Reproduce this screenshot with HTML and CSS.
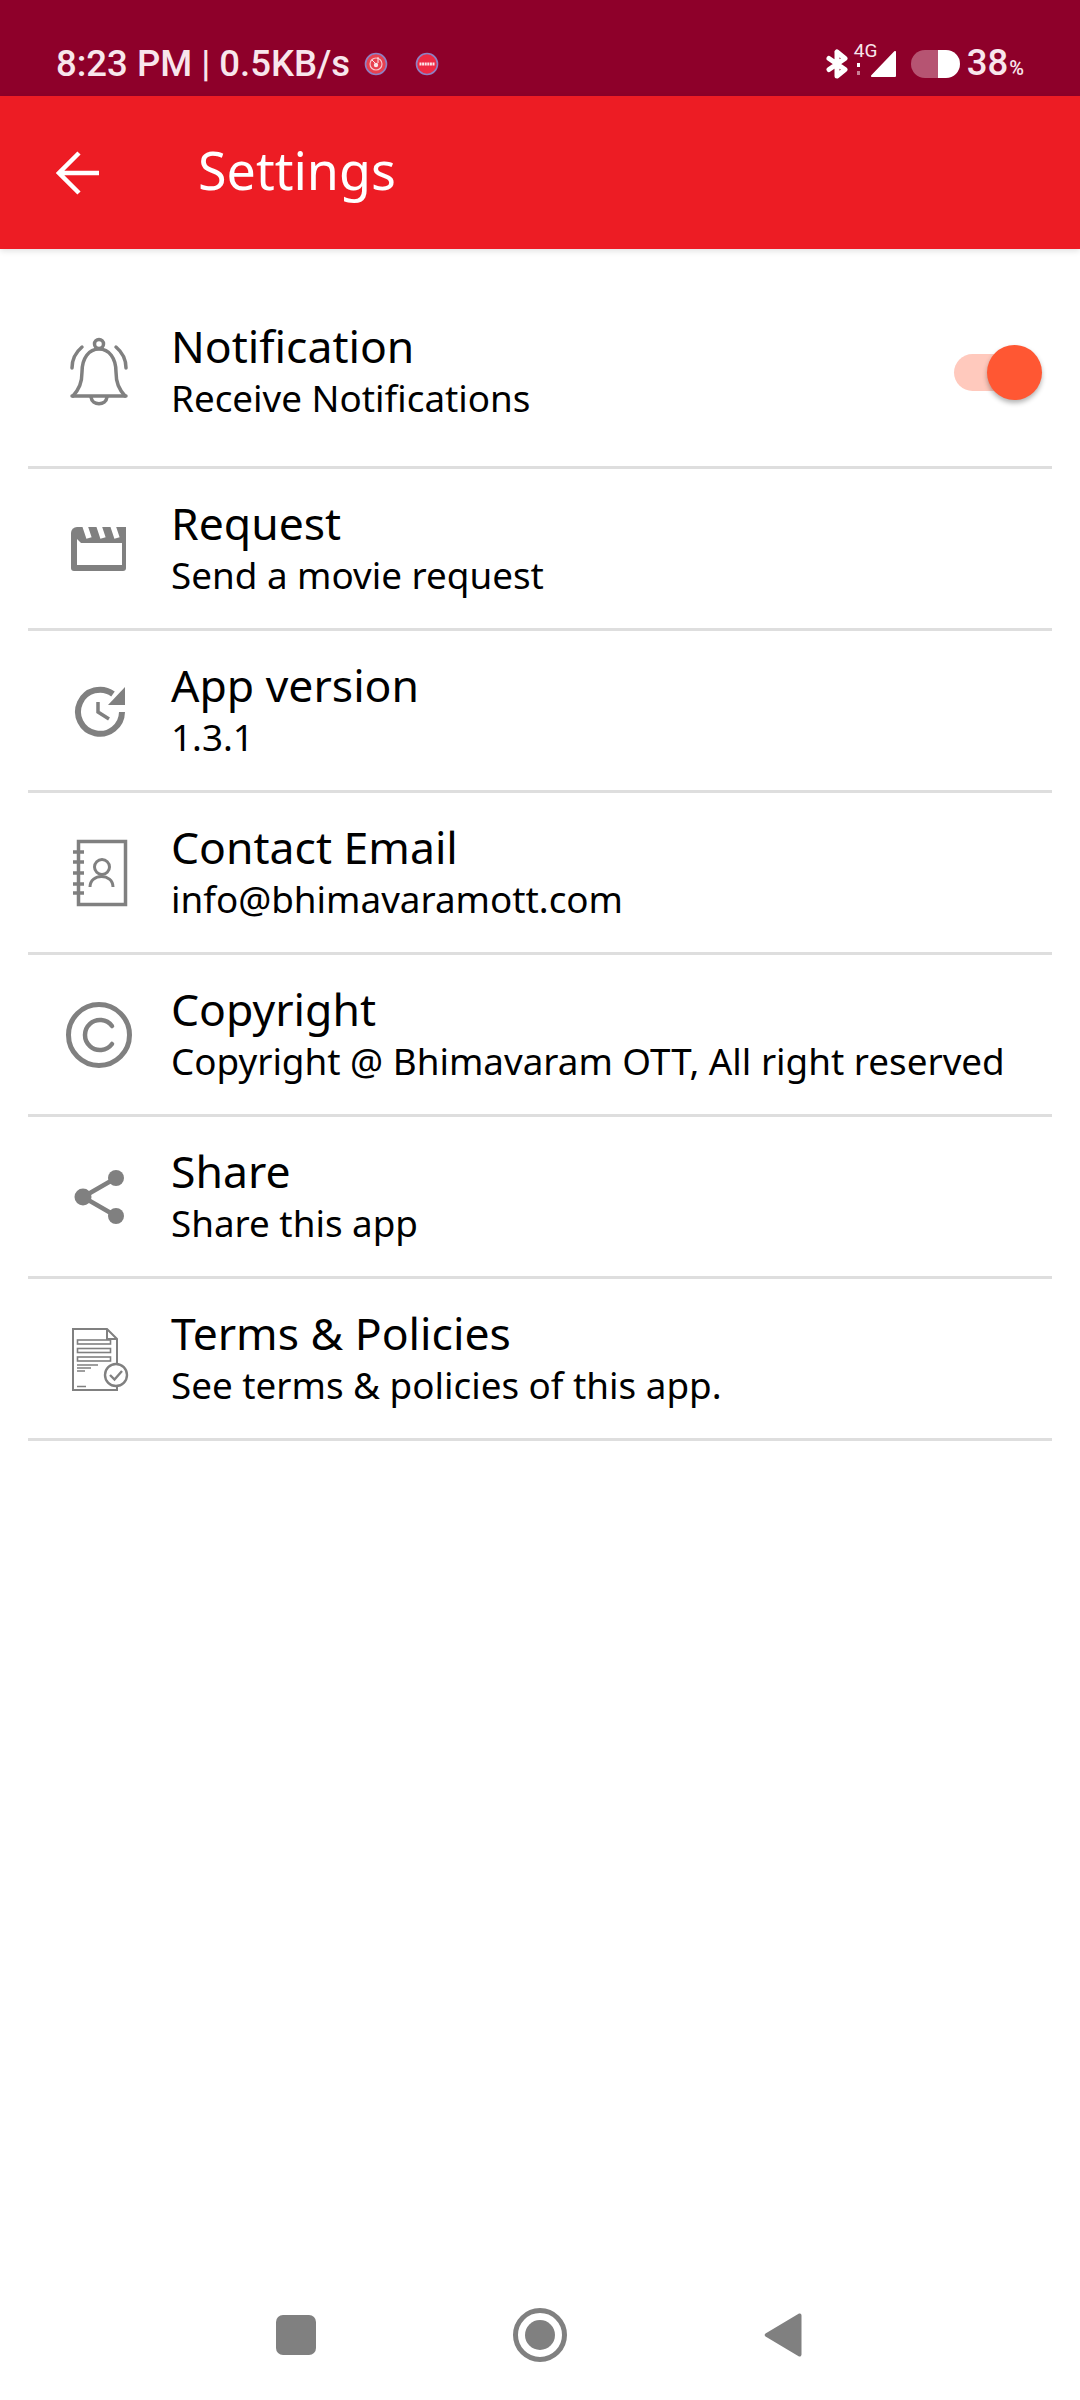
FILE: index.html
```html
<!DOCTYPE html>
<html lang="en">
<head>
<meta charset="utf-8">
<title>Settings</title>
<link rel="stylesheet" href="styles.css">
</head>
<body>
<div class="screen">
  <header class="status">
    <div class="status-left">
      <span class="status-time">8:23 PM | 0.5KB/s</span>
      <svg class="app-dot" viewBox="0 0 24 24"><circle cx="12" cy="12" r="10.5" fill="#e8404f" stroke="#8f80c4" stroke-width="1.6"/><circle cx="12" cy="12" r="6" fill="none" stroke="#f6c4cc" stroke-width="1.2"/><circle cx="12" cy="13" r="2.2" fill="#fbe4e8"/><path d="M14 5v6M8 8l3 3" stroke="#fbe4e8" stroke-width="1"/></svg>
      <svg class="app-dot app-dot-second" viewBox="0 0 24 24"><circle cx="12" cy="12" r="10.5" fill="#ee2a44" stroke="#8f80c4" stroke-width="1.6"/><path d="M4.5 12h15" stroke="#fbe4e8" stroke-width="3" stroke-dasharray="2 .6"/></svg>
    </div>
    <div class="status-right">
      <svg class="sb-bt" viewBox="0 0 24 30"><path d="M12 3v24l8-6.500-16-11M12 3l8 6.500-16 11" fill="none" stroke="#fff" stroke-width="5" stroke-linejoin="round" stroke-linecap="round"/></svg>
      <div class="sb-net">
        <span class="sb-4g">4G</span>
        <span class="sb-dots"><i class="sb-dot"></i><i class="sb-dot sb-dot-dim"></i></span>
      </div>
      <svg class="sb-signal" viewBox="0 0 28 28"><path d="M26 2v24a1 1 0 0 1-1 1H2a1 1 0 0 1-.7-1.700L24.300 1.300A1 1 0 0 1 26 2z" fill="#fff"/></svg>
      <div class="sb-battery"><span class="sb-battery-empty"></span><span class="sb-battery-full"></span></div>
      <span class="sb-level">38<span class="sb-pct">%</span></span>
    </div>
  </header>

  <div class="appbar">
    <svg class="back" viewBox="0 0 44 44"><path d="M43 22H3M23 2 3 22l20 20" fill="none" stroke="#fff" stroke-width="4.500"/></svg>
    <h1 class="appbar-title">Settings</h1>
  </div>

  <main class="list">
    <section class="row row-first">
      <svg class="icon" viewBox="0 0 72 72"><g fill="none" stroke="#808080" stroke-width="3.500" stroke-linecap="round" stroke-linejoin="round"><circle cx="36" cy="8" r="4.500"/><path d="M9 60h54"/><path d="M10 60c6-7 9-13 9-24 0-14 7-23 17-23s17 9 17 23c0 11 3 17 9 24"/><path d="M28 61c1 9 15 9 16 0"/><path d="M19 11c-6 5-10 12-10 21"/><path d="M53 11c6 5 10 12 10 21"/></g></svg>
      <div class="row-text">
        <div class="row-title">Notification</div>
        <div class="row-sub">Receive Notifications</div>
      </div>
      <div class="toggle"><span class="toggle-track"></span><span class="toggle-thumb"></span></div>
    </section>

    <section class="row">
      <svg class="icon" viewBox="0 0 72 72"><path d="M14 14h49v41a3 3 0 0 1-3 3H11a3 3 0 0 1-3-3V20a6 6 0 0 1 6-6z" fill="#808080"/><path d="M14 26l4 4h41v22H14z" fill="#fff"/><g stroke="#fff" stroke-width="5.500"><path d="M22 13l4 12"/><path d="M36 13l4 12"/><path d="M50 13l4 12"/></g></svg>
      <div class="row-text">
        <div class="row-title">Request</div>
        <div class="row-sub">Send a movie request</div>
      </div>
    </section>

    <section class="row">
      <svg class="icon" viewBox="0 0 72 72"><path d="M59 37A22 22 0 1 1 50 19" fill="none" stroke="#808080" stroke-width="6"/><path d="M62 12v18H45z" fill="#808080"/><path d="M35 27v10l11 7" fill="none" stroke="#808080" stroke-width="3.500"/></svg>
      <div class="row-text">
        <div class="row-title">App version</div>
        <div class="row-sub">1.3.1</div>
      </div>
    </section>

    <section class="row">
      <svg class="icon" viewBox="0 0 72 72"><g fill="none" stroke="#808080"><rect x="15.500" y="4.500" width="47" height="63" stroke-width="3.500"/><path d="M10 15h11M10 25h11M10 36h11M10 47h11M10 56h11" stroke-width="3.500"/><circle cx="39" cy="30" r="7.500" stroke-width="3"/><path d="M27 50c0-14 23-14 23 0" stroke-width="3"/></g></svg>
      <div class="row-text">
        <div class="row-title">Contact Email</div>
        <div class="row-sub">info@bhimavaramott.com</div>
      </div>
    </section>

    <section class="row">
      <svg class="icon" viewBox="0 0 72 72"><g fill="none" stroke="#808080"><circle cx="36" cy="36" r="30.500" stroke-width="5"/><path d="M49 27A15 15 0 1 0 49 45" stroke-width="4.500" stroke-linecap="round"/></g></svg>
      <div class="row-text">
        <div class="row-title">Copyright</div>
        <div class="row-sub">Copyright @ Bhimavaram OTT, All right reserved</div>
      </div>
    </section>

    <section class="row">
      <svg class="icon" viewBox="0 0 72 72"><g fill="#808080"><circle cx="20" cy="36" r="8.500"/><circle cx="53" cy="17" r="8"/><circle cx="53" cy="55" r="8"/></g><path d="M53 17 20 36l33 19" fill="none" stroke="#808080" stroke-width="4.500"/></svg>
      <div class="row-text">
        <div class="row-title">Share</div>
        <div class="row-sub">Share this app</div>
      </div>
    </section>

    <section class="row">
      <svg class="icon" viewBox="0 0 72 72"><g fill="none" stroke="#808080"><path d="M10 6h34l10 10v51H10z" stroke-width="2"/><path d="M44 6v10h10" stroke-width="2"/><rect x="14.500" y="17" width="33" height="4" stroke-width="1.600"/><rect x="14.500" y="25.500" width="33" height="4" stroke-width="1.600"/><rect x="14.500" y="34" width="33" height="4" stroke-width="1.600"/><path d="M14 42h21M14 45h14M14 48h8M14 63.500h9" stroke-width="1.400"/><circle cx="53" cy="52" r="11" fill="#fff" stroke-width="2.400"/><path d="M47 52l4.500 4.500L59 48" stroke-width="2.400"/></g></svg>
      <div class="row-text">
        <div class="row-title">Terms &amp; Policies</div>
        <div class="row-sub">See terms &amp; policies of this app.</div>
      </div>
    </section>
  </main>

  <nav class="navbar">
    <span class="nav-square"></span>
    <span class="nav-home"><span class="nav-home-dot"></span></span>
    <svg class="nav-back" viewBox="0 0 38 46"><path d="M35 1.500a2 2 0 0 1 2.500 2v39a2 2 0 0 1-2.500 2L1.500 24.500a2 2 0 0 1 0-3z" fill="#808080"/></svg>
  </nav>
</div>
</body>
</html>
```

FILE: styles.css
```css
* { box-sizing: border-box; }

html, body {
  margin: 0;
  padding: 0;
  background: #fff;
}

.screen {
  width: 1080px;
  height: 2400px;
  display: flex;
  flex-direction: column;
  background: #fff;
  overflow: hidden;
  font-family: "Noto Sans", sans-serif;
  color: #000;
}

/* status bar */
.status {
  height: 96px;
  flex: none;
  background: #8e002a;
  display: flex;
  align-items: center;
  justify-content: space-between;
  padding: 32px 56px 0 56px;
  font-family: Roboto, sans-serif;
  color: #f8e6ec;
}

.status-left,
.status-right {
  display: flex;
  align-items: center;
}

.status-time {
  font-size: 36.500px;
  font-weight: 500;
  line-height: 40px;
}

.app-dot {
  width: 24px;
  height: 24px;
  margin-left: 14px;
}

.app-dot-second {
  margin-left: 27px;
}

.sb-bt {
  width: 24px;
  height: 30px;
}

.sb-net {
  width: 28px;
  height: 36px;
  margin-left: 5px;
  display: flex;
  flex-direction: column;
  align-items: flex-start;
}

.sb-4g {
  font-size: 19px;
  line-height: 18px;
  margin-top: -4px;
}

.sb-dots {
  display: flex;
  flex-direction: column;
  gap: 4px;
  margin: 3px 0 0 3px;
}

.sb-dot {
  display: block;
  width: 3px;
  height: 4px;
  background: #fff;
}

.sb-dot-dim {
  opacity: .5;
}

.sb-signal {
  width: 28px;
  height: 28px;
  margin-left: -12px;
}

.sb-battery {
  width: 49px;
  height: 28px;
  margin-left: 13px;
  display: flex;
  border-radius: 14px;
  overflow: hidden;
}

.sb-battery-empty {
  width: 27px;
  background: #b65472;
}

.sb-battery-full {
  flex: 1;
  background: #fff;
}

.sb-level {
  font-size: 36.500px;
  font-weight: 500;
  line-height: 40px;
  margin-left: 7px;
  margin-top: 2px;
}

.sb-pct {
  font-size: 20px;
  margin-left: 1px;
}

/* app bar */
.appbar {
  height: 153px;
  flex: none;
  background: #ed1c24;
  display: flex;
  align-items: center;
  padding-left: 56px;
  box-shadow: 0 2px 6px rgba(0, 0, 0, .12);
  position: relative;
}

.back {
  width: 44px;
  height: 44px;
  flex: none;
}

.appbar-title {
  margin: 0 0 6px 98px;
  font-size: 52px;
  font-weight: 400;
  color: #fff;
  line-height: 60px;
}

/* list */
.list {
  flex: 1;
  padding: 0 28px;
}

.row {
  height: 162px;
  display: flex;
  align-items: center;
  border-bottom: 3px solid #dedede;
}

.row-first {
  height: 220px;
  padding-top: 45px;
  padding-bottom: 16px;
  position: relative;
}

.icon {
  width: 72px;
  height: 72px;
  flex: none;
  margin-left: 35px;
}

.row-text {
  margin-left: 36px;
  margin-bottom: 2px;
  display: flex;
  flex-direction: column;
}

.row-title {
  font-size: 44.500px;
  line-height: 54px;
}

.row-sub {
  font-size: 36.800px;
  line-height: 50px;
}

/* toggle */
.toggle {
  position: relative;
  margin-left: auto;
  margin-right: 10px;
  width: 88px;
  height: 55px;
  flex: none;
}

.toggle-track {
  position: absolute;
  left: 0;
  top: 9px;
  width: 76px;
  height: 37px;
  border-radius: 19px;
  background: #ffc9bd;
}

.toggle-thumb {
  position: absolute;
  right: 0;
  top: 0;
  width: 55px;
  height: 55px;
  border-radius: 50%;
  background: #ff5733;
  box-shadow: 0 3px 5px rgba(0, 0, 0, .3);
}

/* nav bar */
.navbar {
  height: 92px;
  flex: none;
  margin-bottom: 19px;
  position: relative;
  display: flex;
  align-items: center;
  padding-left: 276px;
}

.nav-square {
  width: 40px;
  height: 40px;
  border-radius: 7px;
  background: #808080;
}

.nav-home {
  width: 54px;
  height: 54px;
  margin-left: 197px;
  border: 5px solid #808080;
  border-radius: 50%;
  display: flex;
  align-items: center;
  justify-content: center;
}

.nav-home-dot {
  width: 30px;
  height: 30px;
  border-radius: 50%;
  background: #808080;
}

.nav-back {
  width: 38px;
  height: 46px;
  margin-left: 197px;
}
```
